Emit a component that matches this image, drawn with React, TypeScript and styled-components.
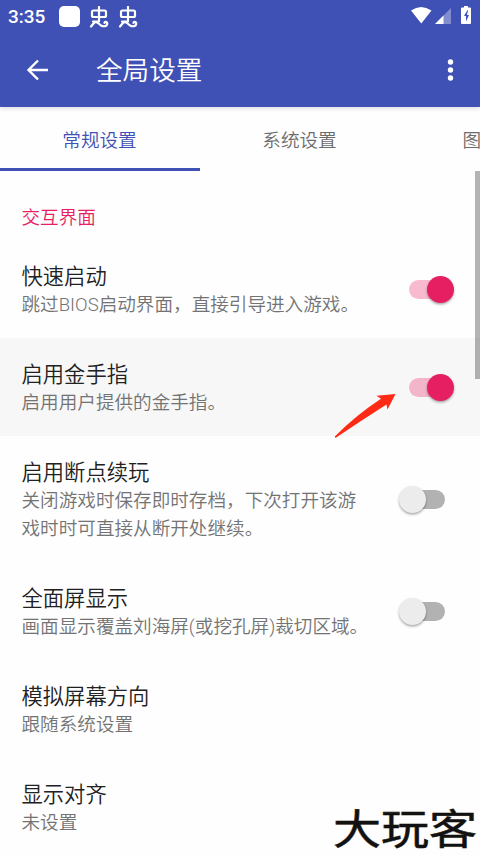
import React from 'react';
import styled, { createGlobalStyle } from 'styled-components';

const GlobalStyle = createGlobalStyle`
  * { box-sizing: border-box; }
  html, body { margin: 0; overflow: hidden; background: #fefefe; }
`;

const Screen = styled.div`
  position: relative;
  display: flex;
  flex-direction: column;
  width: 480px;
  height: 855px;
  overflow: hidden;
  background: #fefefe;
  color: #212121;
  font-family: Roboto, 'Noto Sans CJK SC', sans-serif;
  font-weight: 350;
`;

const Header = styled.header`
  flex: none;
  height: 107px;
  background: #3f51b5;
  color: #fff;
  box-shadow: 0 1px 5px rgba(0, 0, 0, 0.16);
`;

const StatusBar = styled.div`
  display: flex;
  align-items: center;
  height: 32px;
  padding: 0 8px;
`;

const Clock = styled.span`
  width: 51px;
  font-size: 19px;
  font-weight: 500;
  line-height: 32px;
  padding-top: 1px;
`;

const AppBadge = styled.span`
  width: 21px;
  height: 21px;
  margin-right: 9px;
  border-radius: 5px;
  background: #fff;
`;

const Notifications = styled.div`
  display: flex;
  gap: 7px;
  margin-top: 2px;
`;

const SystemIcons = styled.div`
  margin-left: auto;
  margin-right: -4px;
  height: 32px;
`;

const Toolbar = styled.div`
  display: flex;
  align-items: center;
  height: 75px;
  padding: 0 19px 0 26px;
`;

const Title = styled.h1`
  flex: 1;
  margin: 0 0 0 47px;
  padding-top: 2px;
  font-size: 26.6px;
  font-weight: 350;
  line-height: 36px;
`;

const IconButton = styled.button`
  display: flex;
  padding: 0;
  border: 0;
  background: none;
  color: inherit;
`;

const Tabs = styled.nav`
  display: flex;
  flex: none;
  height: 64px;
  overflow: hidden;
`;

const Tab = styled.div<{ $active?: boolean }>`
  flex: none;
  width: 200px;
  height: 64px;
  padding: 3px 1px 0 0;
  border-bottom: 3px solid ${p => (p.$active ? '#3f51b5' : 'transparent')};
  color: ${p => (p.$active ? '#3f51b5' : '#6c6c6c')};
  font-size: 18.6px;
  line-height: 62px;
  text-align: center;
`;

const EdgeTab = styled(Tab)`
  padding-left: 62.5px;
  text-align: left;
`;

const Body = styled.main`
  position: relative;
  flex: 1;
  overflow: hidden;
`;

const Category = styled.h2`
  height: 69px;
  margin: 0;
  padding: 33px 21.5px 0;
  color: #e91e63;
  font-size: 18.6px;
  font-weight: 350;
  line-height: 28px;
`;

const Row = styled.div<{ $pressed?: boolean }>`
  display: flex;
  align-items: center;
  justify-content: space-between;
  padding: 22px 26px 19px 21.5px;
  background: ${p => (p.$pressed ? '#f7f7f7' : 'transparent')};
`;

const RowText = styled.div`
  width: 350px;
`;

const RowTitle = styled.div`
  font-size: 21.3px;
  line-height: 29px;
`;

const RowSummary = styled.div`
  color: #737373;
  font-size: 18.6px;
  line-height: 28px;
  white-space: pre-line;
`;

const Track = styled.span<{ $on: boolean }>`
  display: flex;
  align-items: center;
  justify-content: ${p => (p.$on ? 'flex-end' : 'flex-start')};
  flex: none;
  width: 36px;
  height: 19px;
  margin: -3px 9.5px 0 0;
  border-radius: 10px;
  background: ${p => (p.$on ? 'rgba(233, 30, 99, 0.3)' : '#b2b2b2')};
`;

const Knob = styled.span<{ $on: boolean }>`
  flex: none;
  width: 27px;
  height: 27px;
  margin: 0 -9.5px;
  border-radius: 50%;
  background: ${p => (p.$on ? '#e61e62' : '#ececec')};
  box-shadow: 0 1.5px 2.5px rgba(0, 0, 0, 0.35);
`;

const Scrollbar = styled.div`
  position: absolute;
  top: 0;
  right: 0;
  width: 5px;
  height: 208px;
  background: rgba(0, 0, 0, 0.29);
`;

const Pointer = styled.svg`
  position: absolute;
  left: 332px;
  top: 390px;
`;

const Watermark = styled.div`
  position: absolute;
  left: 333px;
  top: 799px;
  color: #111;
  font-family: 'Noto Sans CJK SC', sans-serif;
  font-size: 48px;
  font-weight: 400;
  line-height: 54px;
  white-space: nowrap;
  transform: scaleY(0.86);
  -webkit-text-stroke: 0.6px #111;
  text-shadow: 0 0 2px #e9e3c4;
`;

const BugIcon = () => (
  <svg width="22" height="22" viewBox="0 0 22 22" fill="none" stroke="#fff" strokeWidth="2.2" strokeLinecap="round" strokeLinejoin="round">
    <path d="M10 1v14M4.500 4.500h11q1.500 0 1.500 1.500v3.500q0 1.500-1.500 1.500H4.500q-1.500 0-1.500-1.500V6q0-1.500 1.500-1.500Z" />
    <path d="M2 20.500L4.500 17.500Q6.500 15 9 17L12 19.500Q15 21 17.500 19.500Q19 17.500 17.500 16Q15.500 15.500 15.500 17M4 15.500h6" />
  </svg>
);

const Switch = ({ on }: { on: boolean }) => (
  <Track $on={on}>
    <Knob $on={on} />
  </Track>
);

interface Setting {
  title: string;
  summary: string;
  on?: boolean;
  pressed?: boolean;
}

const settings: Setting[] = [
  { title: '快速启动', summary: '跳过BIOS启动界面，直接引导进入游戏。', on: true },
  { title: '启用金手指', summary: '启用用户提供的金手指。', on: true, pressed: true },
  { title: '启用断点续玩', summary: '关闭游戏时保存即时存档，下次打开该游\n戏时时可直接从断开处继续。', on: false },
  { title: '全面屏显示', summary: '画面显示覆盖刘海屏(或挖孔屏)裁切区域。', on: false },
  { title: '模拟屏幕方向', summary: '跟随系统设置' },
  { title: '显示对齐', summary: '未设置' },
];

export default function App() {
  return (
    <>
      <GlobalStyle />
      <Screen>
        <Header>
          <StatusBar>
            <Clock>3:35</Clock>
            <AppBadge />
            <Notifications>
              <BugIcon />
              <BugIcon />
            </Notifications>
            <SystemIcons>
              <svg width="66" height="32" viewBox="0 0 66 32" fill="#fff">
                <path d="M1 10.500Q11 3.500 21.500 10.500L11.300 23.500Z" />
                <path d="M41 8v16H25Z" opacity=".35" />
                <path d="M33.500 15.500V24H25Z" />
                <path d="M54 6h4v1.500h2q1 0 1 1V23q0 1-1 1h-8q-1 0-1-1V8.500q0-1 1-1h2Z" />
                <path d="m57.500 10-3.500 6h2v5.500l3-6.500h-2l1-5Z" fill="#3f51b5" />
              </svg>
            </SystemIcons>
          </StatusBar>
          <Toolbar>
            <IconButton aria-label="返回">
              <svg width="23" height="22" viewBox="0 0 23 22" fill="none" stroke="#fff" strokeWidth="2.400">
                <path d="M22 11H3M12 1.500 2.500 11l9.500 9.500" />
              </svg>
            </IconButton>
            <Title>全局设置</Title>
            <IconButton aria-label="更多">
              <svg width="21" height="24" viewBox="0 0 21 24" fill="#fff">
                <circle cx="10.500" cy="4" r="2.700" />
                <circle cx="10.500" cy="12" r="2.700" />
                <circle cx="10.500" cy="20" r="2.700" />
              </svg>
            </IconButton>
          </Toolbar>
        </Header>
        <Tabs>
          <Tab $active>常规设置</Tab>
          <Tab>系统设置</Tab>
          <EdgeTab>图形设置</EdgeTab>
        </Tabs>
        <Body>
          <Category>交互界面</Category>
          {settings.map(s => (
            <Row key={s.title} $pressed={s.pressed}>
              <RowText>
                <RowTitle>{s.title}</RowTitle>
                <RowSummary>{s.summary}</RowSummary>
              </RowText>
              {s.on !== undefined && <Switch on={s.on} />}
            </Row>
          ))}
          <Scrollbar />
        </Body>
        <Pointer width="66" height="50" viewBox="0 0 66 50">
          <path d="M63.500 4 44.500 5.700 49 8.700Q24 25 2.800 46.500L3.500 48Q30 30 54.500 14.500L55.500 19.500Z" fill="#ff2a16" />
        </Pointer>
        <Watermark>大玩客</Watermark>
      </Screen>
    </>
  );
}
